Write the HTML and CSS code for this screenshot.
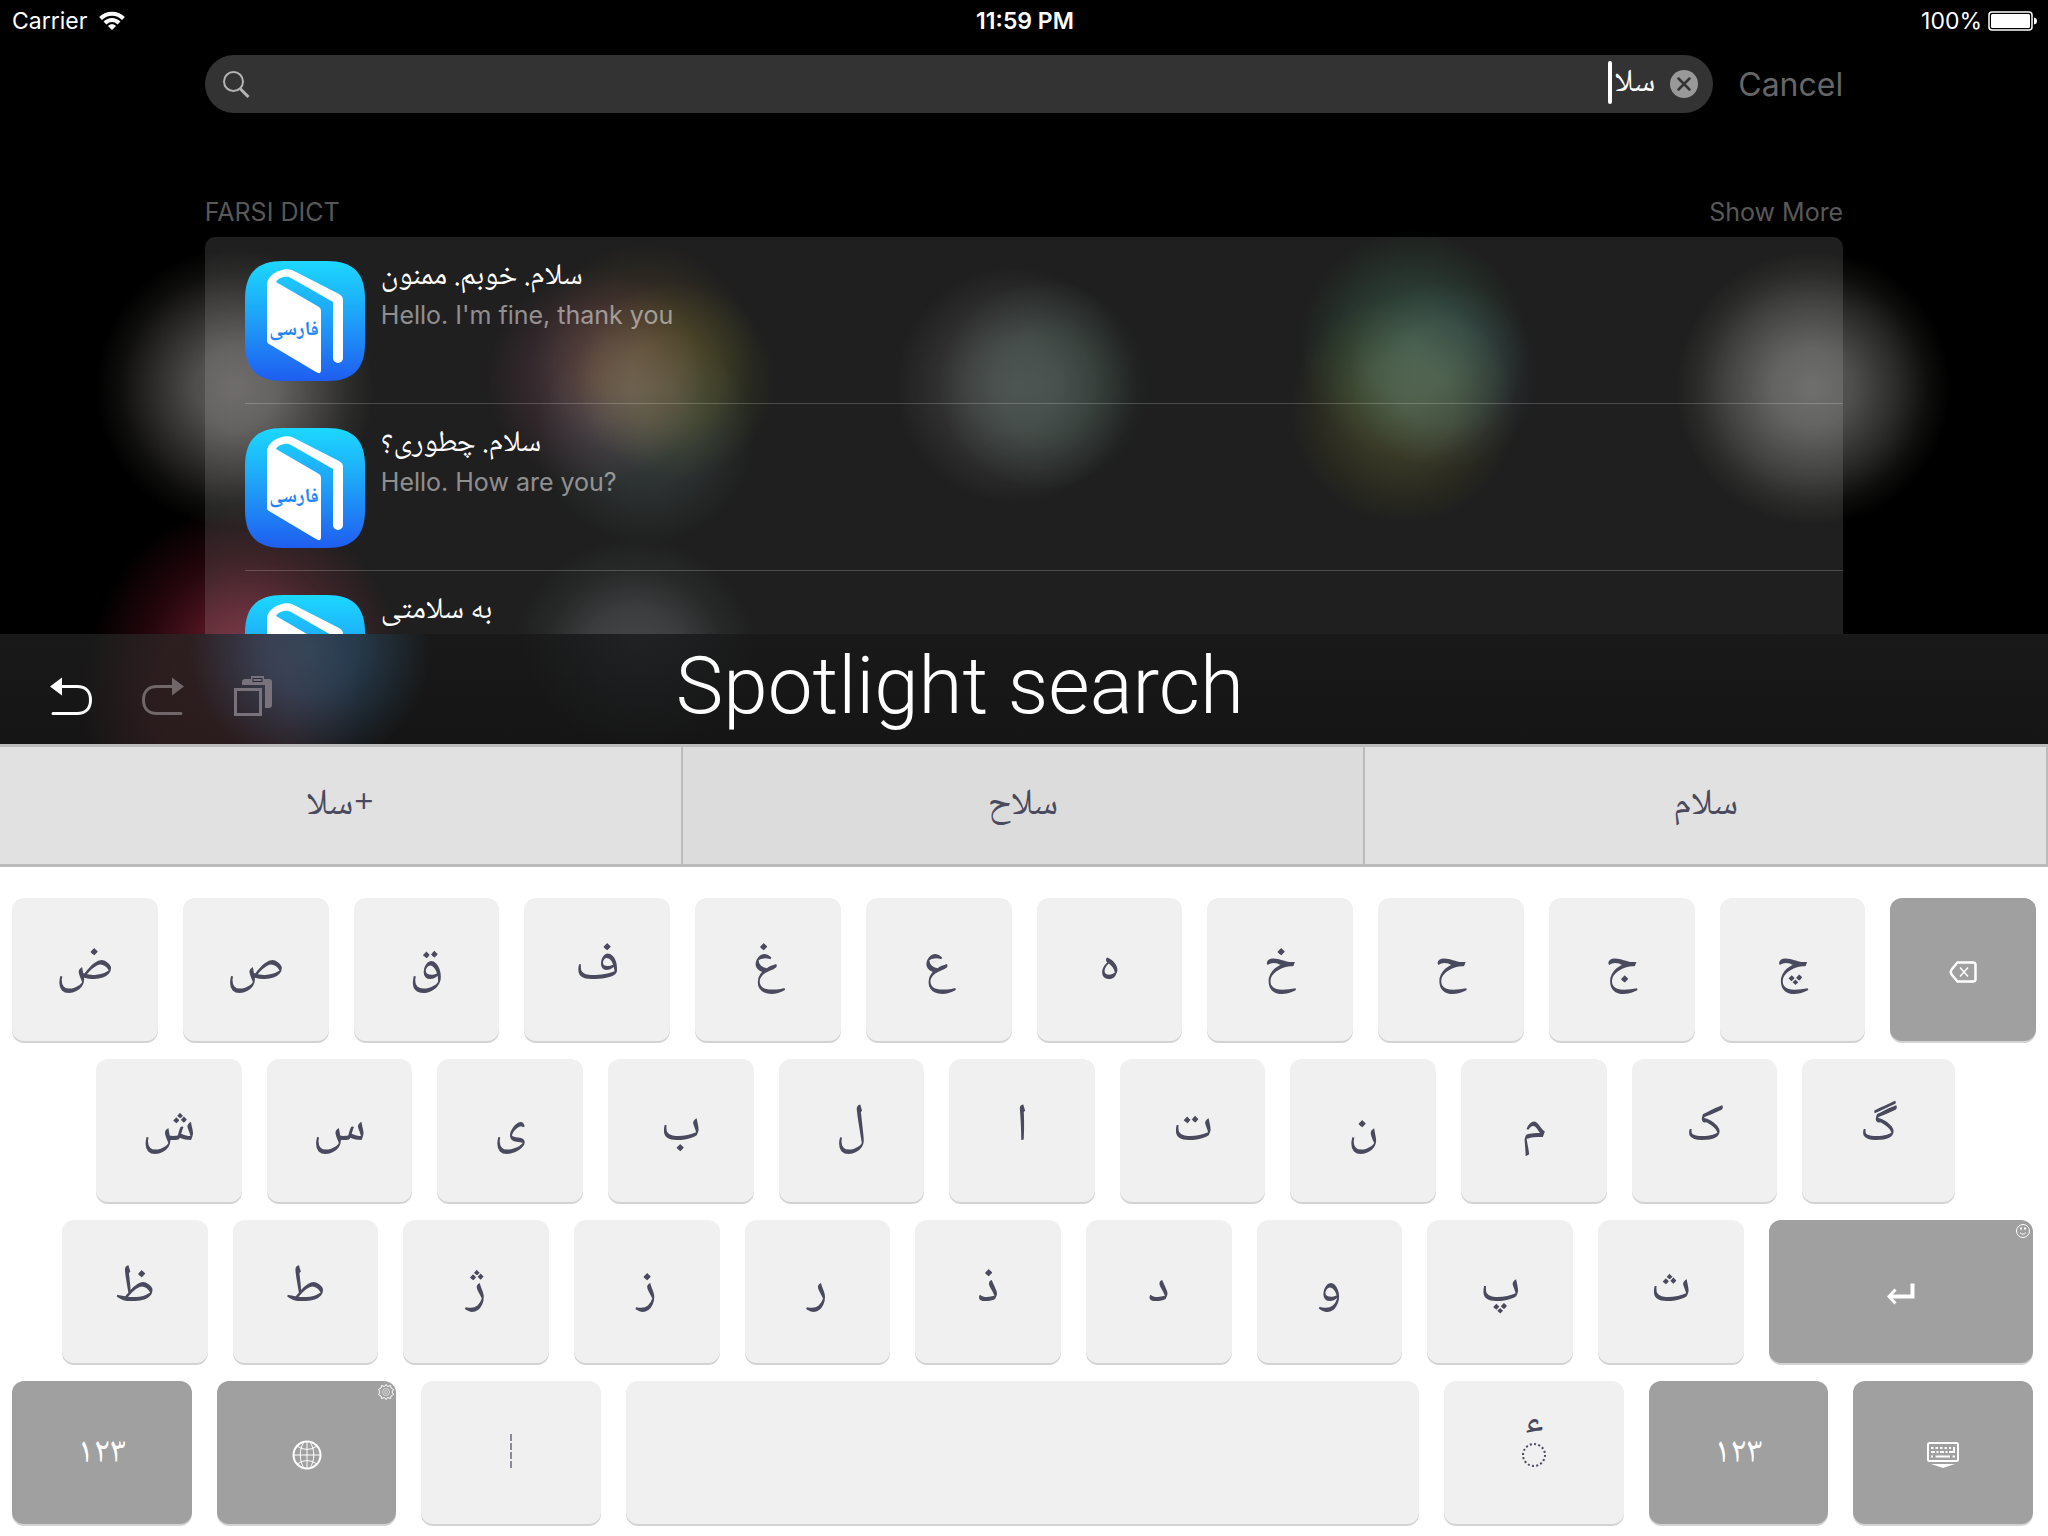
FILE: index.html
```
<!DOCTYPE html>
<html lang="en">
<head>
  <meta charset="UTF-8" />
  <meta name="viewport" content="width=device-width, initial-scale=1.0"/>
  <title>Spotlight search</title>
  <link rel="stylesheet" href="styles.css">
</head>
<body>

  <svg class="defs" width="0" height="0">
    <defs>
      <linearGradient id="iconBlue" x1="0" y1="0" x2="0" y2="1">
        <stop offset="0" stop-color="#1cd8ff"/>
        <stop offset="0.45" stop-color="#1ea4f8"/>
        <stop offset="1" stop-color="#1f5df0"/>
      </linearGradient>
      <symbol id="dict" viewBox="0 0 120 120">
        <path d="M38 0H82C108 0 120 12 120 38V82C120 108 108 120 82 120H38C12 120 0 108 0 82V38C0 12 12 0 38 0Z" fill="url(#iconBlue)"/>
        <path d="M22 24C22 13 38 6 47 9L94 33Q98 35 98 39V97A5 5 0 0 1 88 97V41L46 17C41 14 33 17 31 21L74 46Q76 47 76 50V109Q76 114 71 111L24 83Q22 82 22 80Z" fill="#fff"/>
        <text x="49" y="74" text-anchor="middle" class="dict-text">فارسی</text>
      </symbol>
    </defs>
  </svg>

  <main class="spotlight">
    <header class="status">
      <div class="carrier">
        <span>Carrier</span>
        <svg width="26" height="20" viewBox="0 0 26 20" fill="none" stroke="#fff" stroke-width="4">
          <path d="M1.5 7.5C8 1 18 1 24.500 7.500"/>
          <path d="M6 12C10 8 16 8 20 12"/>
          <path d="M13 19L9 15C11 12.500 15 12.500 17 15Z" fill="#fff" stroke="none"/>
        </svg>
      </div>
      <strong>11:59 PM</strong>
      <div class="battery">
        <span>100%</span>
        <svg width="50" height="20" viewBox="0 0 50 20">
          <rect x="1" y="1" width="43" height="18" rx="3" fill="none" stroke="#fff" stroke-width="1.500"/>
          <rect x="3" y="3" width="39" height="14" rx="1.500" fill="#fff"/>
          <path d="M46 6.500Q49 7 49 10T46 13.500Z" fill="#fff"/>
        </svg>
      </div>
    </header>

    <div class="search-row">
      <div class="search-box">
        <svg width="27" height="27" viewBox="0 0 27 27" fill="none" stroke="#b4b4b4" stroke-width="2">
          <circle cx="10.500" cy="10.500" r="9.500"/>
          <path d="M17 17.500L25.500 26" stroke-width="3"/>
        </svg>
        <input type="text" id="search" dir="rtl" lang="fa" aria-label="Search" value="سلا" />
        <span class="caret"></span>
        <button class="clear" aria-label="Clear">
          <svg width="28" height="28" viewBox="0 0 28 28">
            <circle cx="14" cy="14" r="14" fill="#999"/>
            <path d="M8.500 8.500L19.500 19.500M19.500 8.500L8.500 19.500" stroke="#333" stroke-width="2.500" stroke-linecap="round"/>
          </svg>
        </button>
      </div>
      <button class="cancel">Cancel</button>
    </div>

    <section class="results">
      <div class="results-head">
        <h2>FARSI DICT</h2>
        <a href="#">Show More</a>
      </div>
      <ul>
        <li>
          <svg class="app-icon"><use href="#dict"/></svg>
          <div class="entry">
            <h3 dir="rtl" lang="fa">سلام. خوبم. ممنون</h3>
            <p>Hello. I'm fine, thank you</p>
          </div>
        </li>
        <li>
          <svg class="app-icon"><use href="#dict"/></svg>
          <div class="entry">
            <h3 dir="rtl" lang="fa">سلام. چطوری؟</h3>
            <p>Hello. How are you?</p>
          </div>
        </li>
        <li>
          <svg class="app-icon"><use href="#dict"/></svg>
          <div class="entry">
            <h3 dir="rtl" lang="fa">به سلامتی</h3>
          </div>
        </li>
      </ul>
    </section>
  </main>

  <div class="toolbar">
    <div class="tools">
      <button aria-label="Undo">
        <svg width="42" height="38" viewBox="0 0 42 38">
          <path d="M10 9.500H27C36 9.500 40.500 15 40.500 23S36 36.500 27 36.500H3" fill="none" stroke="#fff" stroke-width="3" stroke-linecap="round"/>
          <path d="M0 9.500L12 0.500V18.500Z" fill="#fff"/>
        </svg>
      </button>
      <button aria-label="Redo">
        <svg width="42" height="38" viewBox="0 0 42 38">
          <path d="M32 9.500H15C6 9.500 1.500 15 1.500 23S6 36.500 15 36.500H39" fill="none" stroke="#716769" stroke-width="3" stroke-linecap="round"/>
          <path d="M42 9.500L30 0.500V18.500Z" fill="#716769"/>
        </svg>
      </button>
      <button aria-label="Paste">
        <svg width="38" height="40" viewBox="0 0 38 40">
          <path d="M8 9V6Q8 3 11 3H17V0H30V3H35Q38 3 38 6V29Q38 32 35 32H31V9Z" fill="#77727c"/>
          <rect x="19" y="2.500" width="9" height="3" fill="none" stroke="#2a2a3a"/>
          <rect x="1.500" y="13.500" width="25" height="25" fill="none" stroke="#77727c" stroke-width="3"/>
        </svg>
      </button>
    </div>
    <h1>Spotlight search</h1>
  </div>

  <div class="suggestions" lang="fa">
    <button dir="rtl">+سلا</button>
    <button dir="rtl" class="mid">سلاح</button>
    <button dir="rtl">سلام</button>
  </div>

  <div class="keyboard" lang="fa">
    <div class="row row-1">
      <button class="key">ض</button>
      <button class="key">ص</button>
      <button class="key">ق</button>
      <button class="key">ف</button>
      <button class="key">غ</button>
      <button class="key">ع</button>
      <button class="key">ە</button>
      <button class="key">خ</button>
      <button class="key">ح</button>
      <button class="key">ج</button>
      <button class="key">چ</button>
      <button class="key dark" aria-label="Delete">
        <svg width="28" height="22" viewBox="0 0 28 22" fill="none" stroke="#fff">
          <path d="M8.500 1.500H24Q26.500 1.500 26.500 4V18Q26.500 20.500 24 20.500H8.500L3 14Q0.500 11 3 8Z" stroke-width="2.500"/>
          <path d="M11 6.500L19 15.500M19 6.500L11 15.500" stroke-width="1.500"/>
        </svg>
      </button>
    </div>
    <div class="row row-2">
      <button class="key">ش</button>
      <button class="key">س</button>
      <button class="key">ی</button>
      <button class="key">ب</button>
      <button class="key">ل</button>
      <button class="key">ا</button>
      <button class="key">ت</button>
      <button class="key">ن</button>
      <button class="key">م</button>
      <button class="key">ک</button>
      <button class="key">گ</button>
    </div>
    <div class="row row-3">
      <button class="key">ظ</button>
      <button class="key">ط</button>
      <button class="key">ژ</button>
      <button class="key">ز</button>
      <button class="key">ر</button>
      <button class="key">ذ</button>
      <button class="key">د</button>
      <button class="key">و</button>
      <button class="key">پ</button>
      <button class="key">ث</button>
      <button class="key dark" aria-label="Return">
        <svg width="28" height="22" viewBox="0 0 28 22" fill="none" stroke="#fff">
          <path d="M3 13.500H25.500V0.500" stroke-width="4"/>
          <path d="M8.500 6.500L2 13.500L8.500 20.500" stroke-width="3"/>
        </svg>
        <svg class="corner" width="16" height="16" viewBox="0 0 16 16" fill="none" stroke="#fff">
          <circle cx="8" cy="8" r="6.500"/>
          <path d="M5 5.500H7M9 5.500H11" stroke-width="2"/>
          <path d="M5 9.500Q8 13 11 9.500"/>
        </svg>
      </button>
    </div>
    <div class="row row-4">
      <button class="key dark digits">۱۲۳</button>
      <button class="key dark" aria-label="Next keyboard">
        <svg width="30" height="30" viewBox="0 0 30 30" fill="none" stroke="#fff">
          <circle cx="15" cy="15" r="13.500" stroke-width="2"/>
          <path d="M15 1V29M1 15H29M12 2C7 9 7 21 12 28M18 2C23 9 23 21 18 28M5 6Q15 13 25 6M5 24Q15 17 25 24"/>
        </svg>
        <svg class="corner" width="16" height="16" viewBox="0 0 16 16" fill="none" stroke="#fff">
          <path d="M8 0.500L9.500 2.500L12.500 1.500L13 4L15.500 5.500L14 8L15.500 10.500L13 12L12.500 14.500L9.500 13.500L8 15.500L6.500 13.500L3.500 14.500L3 12L0.500 10.500L2 8L0.500 5.500L3 4L3.500 1.500L6.500 2.500Z"/>
          <circle cx="8" cy="8" r="3.500" stroke-opacity="0.600"/>
          <circle cx="8" cy="8" r="1.500" stroke-opacity="0.500"/>
        </svg>
      </button>
      <button class="key" aria-label="Half space">
        <svg width="4" height="34" viewBox="0 0 4 34"><path d="M2 0V34" stroke="#8c8998" stroke-width="2" stroke-dasharray="7 2"/></svg>
      </button>
      <button class="key" aria-label="Space"></button>
      <button class="key hamza">
        <span>ء</span>
        <svg width="26" height="26" viewBox="0 0 26 26"><circle cx="13" cy="13" r="11" fill="none" stroke="#4a4a5e" stroke-width="2" stroke-dasharray="2 2.300"/></svg>
      </button>
      <button class="key dark digits">۱۲۳</button>
      <button class="key dark" aria-label="Hide keyboard">
        <svg width="32" height="26" viewBox="0 0 32 26" fill="none" stroke="#fff">
          <rect x="1" y="1" width="30" height="18" rx="1.500" stroke-width="2"/>
          <path d="M4 6H24" stroke-width="2" stroke-dasharray="2.500 2"/>
          <path d="M4 10H24" stroke-width="2" stroke-dasharray="4 1.500 2 1.500"/>
          <path d="M27 5V10H24M4 14.500H6M8.500 14.500H23M25.500 14.500H28" stroke-width="2"/>
          <path d="M4 22H28L16 26Z" fill="#fff" stroke="none"/>
        </svg>
      </button>
    </div>
  </div>

</body>
</html>
```

FILE: styles.css
```
:root {
  --field: #333;
  --muted: #666;
  --key: #f0f0f0;
  --key-dark: #a0a0a0;
  --key-shadow: #d3d3d3;
  --ink: #4a4a5e;
  --line: #bbb;
  --ui: Inter, "Liberation Sans", sans-serif;
  --farsi: "Noto Naskh Arabic", "Noto Sans Arabic", "DejaVu Sans", sans-serif;
}
* { box-sizing: border-box; }
body {
  margin: 0;
  height: 100vh;
  display: flex;
  flex-direction: column;
  background: #000;
  color: #fff;
  font-family: var(--ui);
}
h1, h2, h3, p, ul {
  margin: 0;
  padding: 0;
  font-weight: normal;
}
button {
  border: none;
  padding: 0;
  background: none;
  color: inherit;
  font-family: inherit;
  cursor: pointer;
}
svg { display: block; }
.defs { position: absolute; }

/* search screen, blurred home icons behind it */
.spotlight {
  flex: 1;
  min-height: 0;
  overflow: hidden;
  background:
    radial-gradient(circle at 11.500% 388px, #5c5958 0, #504e4d 40px, #2e2c2b 80px, #0e0e0d 115px, #000 140px),
    radial-gradient(circle at 29% 378px, #301a1a 0, #24141a 40px, #12080c 75px, #000 110px),
    radial-gradient(circle at 31.500% 350px, #241608 0, #1c1206 45px, #0c0802 80px, #000 110px),
    radial-gradient(circle at 33% 380px, #1a1c06 0, #161804 45px, #0a0c02 75px, #000 100px),
    radial-gradient(circle at 31.500% 435px, #161e1e 0, #101616 50px, #000 110px),
    radial-gradient(circle at 49.500% 385px, #2a282a 0, #222022 45px, #100f10 85px, #000 120px),
    radial-gradient(circle at 51% 385px, #101e18 0, #0c1812 50px, #000 105px),
    radial-gradient(circle at 69% 345px, #122a20 0, #0e2218 50px, #06100a 85px, #000 115px),
    radial-gradient(circle at 70.500% 375px, #12181c 0, #0c1216 50px, #000 95px),
    radial-gradient(circle at 68.500% 410px, #24240c 0, #1c1c08 50px, #0c0c02 85px, #000 115px),
    radial-gradient(circle at 88.500% 388px, #5c5c5a 0, #4e4e4c 40px, #2a2a29 85px, #0e0e0d 115px, #000 138px),
    radial-gradient(circle at 12% 660px, #702432 0, #501420 50px, #24060c 100px, #000 155px),
    radial-gradient(circle at 31% 660px, #2c2e30 0, #222324 50px, #0a0b0b 90px, #000 125px),
    #000;
  background-blend-mode: screen;
}
.status {
  display: grid;
  grid-template-columns: 1fr auto 1fr;
  align-items: center;
  height: 42px;
  padding: 0 10px 0 12px;
  font-size: 23px;
}
.status strong { font-weight: 600; }
.carrier, .battery {
  display: flex;
  align-items: center;
  gap: 12px;
}
.battery {
  justify-content: flex-end;
  gap: 6px;
}
.search-row {
  display: flex;
  gap: 25px;
  padding: 0 10%;
  margin-top: 13px;
}
.search-box {
  position: relative;
  flex: 1;
  min-width: 0;
  height: 58px;
  display: flex;
  align-items: center;
  gap: 15px;
  padding: 0 15px 0 18px;
  border-radius: 29px;
  background: var(--field);
}
.search-box input {
  flex: 1;
  min-width: 0;
  height: 50px;
  padding: 0;
  border: none;
  outline: none;
  background: none;
  color: #fff;
  font: 32px var(--farsi);
}
.caret {
  position: absolute;
  top: 6px;
  right: 101px;
  width: 4px;
  height: 43px;
  border-radius: 2px;
  background: #fff;
}
.cancel {
  color: var(--muted);
  font-size: 32px;
}
.results { padding: 82px 10% 0; }
.results-head {
  display: flex;
  justify-content: space-between;
  line-height: 34px;
  font-size: 25px;
}
.results-head h2 { font-size: 25px; }
.results-head h2, .results-head a {
  color: #585858;
  text-decoration: none;
}
.results ul {
  margin-top: 8px;
  list-style: none;
  border-radius: 10px 10px 0 0;
  background: rgba(255,255,255,0.12);
}
.results li {
  display: flex;
  gap: 16px;
  height: 167px;
  margin-left: 40px;
  padding-top: 24px;
  border-bottom: 1px solid rgba(255,255,255,0.2);
}
.app-icon {
  width: 120px;
  height: 120px;
}
.dict-text {
  font: bold 20px var(--farsi);
  fill: #1e86f4;
}
.entry h3 {
  height: 36px;
  text-align: left;
  font: 30px/34px var(--farsi);
}
.entry p {
  line-height: 36px;
  font-size: 25px;
  color: rgba(255,255,255,0.5);
}

/* toolbar over the keyboard */
.toolbar {
  display: grid;
  grid-template-columns: 33% 1fr;
  height: 110px;
  background:
    radial-gradient(circle at 310px 15px, #142e42 0, #10263a 45px, #08141e 80px, #000 120px),
    radial-gradient(ellipse 140px 180px at 220px 70px, #18080a 0, #160608 50%, #000 100%),
    radial-gradient(circle at 640px 0, #080a0c 0, #000 120px),
    linear-gradient(#191919, #151515);
  background-blend-mode: screen;
}
.tools {
  display: flex;
  align-items: center;
  gap: 50px;
  padding: 14px 0 0 50px;
}
.toolbar h1 {
  font: 300 80px/104px Roboto, sans-serif;
  white-space: nowrap;
}
.suggestions {
  display: grid;
  grid-template-columns: repeat(3, 1fr);
  height: 123px;
  border: solid var(--line);
  border-width: 3px 0;
  background: #e1e1e1;
}
.suggestions button {
  border-right: 2px solid var(--line);
  color: var(--ink);
  font: 37px/60px var(--farsi);
}
.suggestions .mid { background: #dcdcdc; }

/* keys */
.keyboard {
  display: grid;
  gap: 18px;
  padding: 31px 0 12px;
  background: #fff;
}
.row {
  display: grid;
  gap: 25px;
}
.row-1 {
  grid-template-columns: repeat(12, 1fr);
  padding: 0 12px;
}
.row-2 {
  grid-template-columns: repeat(10, 146fr) 153fr;
  padding: 0 93px 0 96px;
}
.row-3 {
  grid-template-columns: repeat(10, 146fr) 265fr;
  padding: 0 15px 0 62px;
}
.row-4 {
  grid-template-columns: repeat(3, 180fr) 794fr repeat(3, 180fr);
  padding: 0 15px 0 12px;
}
.key {
  position: relative;
  display: flex;
  align-items: center;
  justify-content: center;
  min-width: 0;
  height: 143px;
  padding-bottom: 4px;
  border-radius: 12px;
  background: var(--key);
  box-shadow: 0 2px 0 var(--key-shadow);
  color: var(--ink);
  font: 53px/80px var(--farsi);
}
.key.dark {
  padding: 4px 0 0;
  background: var(--key-dark);
  color: #fff;
}
.key.digits { font-size: 36px; }
.key.hamza {
  flex-direction: column;
  padding-bottom: 36px;
  font-size: 44px;
  line-height: 40px;
}
.corner {
  position: absolute;
  top: 3px;
  right: 2px;
}
```
